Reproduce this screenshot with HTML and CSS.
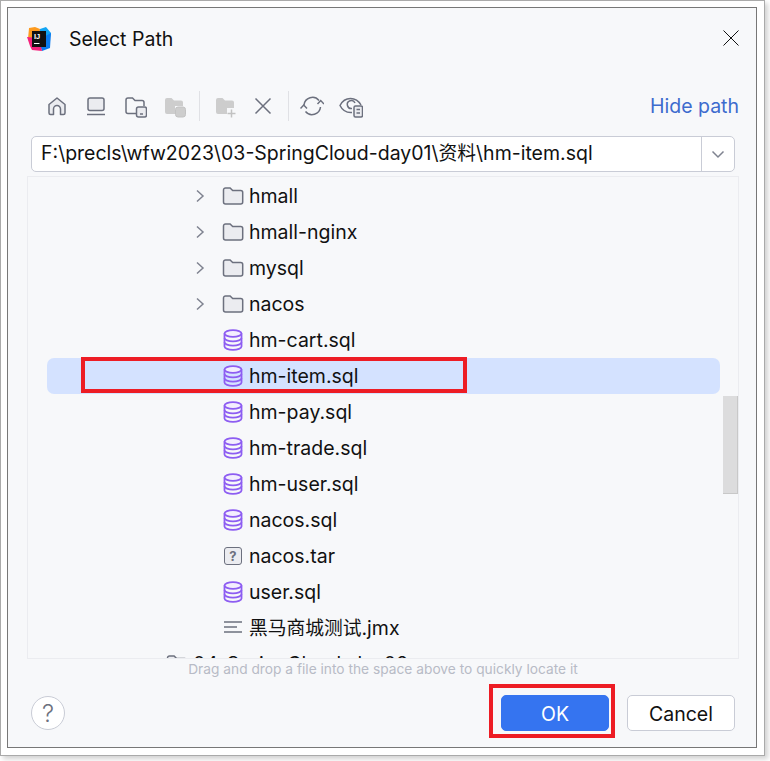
FILE: index.html
```html
<!DOCTYPE html>
<html lang="en">
<head>
    <meta charset="UTF-8">
    <title>Select Path</title>
    <link rel="stylesheet" href="styles.css">
</head>
<body>
    <svg class="sprites" width="0" height="0">
        <symbol id="i-folder" viewBox="0 0 22 20">
            <path d="M1.5 4a2 2 0 0 1 2-2h4.600l2.600 2.600h8a2 2 0 0 1 2 2V16a2 2 0 0 1-2 2H3.500a2 2 0 0 1-2-2z" fill="#ebecf0" stroke="#6c707e" stroke-width="1.500"/>
        </symbol>
        <symbol id="i-db" viewBox="0 0 20 22">
            <g fill="none" stroke="#8d5df2" stroke-width="1.800">
                <ellipse cx="10" cy="4.500" rx="8.500" ry="3.300" fill="#f3eefe"/>
                <path d="M1.500 4.500v13c0 1.800 3.800 3.300 8.500 3.300s8.500-1.500 8.500-3.300v-13"/>
                <path d="M1.500 9c0 1.800 3.800 3.300 8.500 3.300s8.500-1.500 8.500-3.300"/>
                <path d="M1.500 13.300c0 1.800 3.800 3.300 8.500 3.300s8.500-1.500 8.500-3.300"/>
            </g>
        </symbol>
        <symbol id="i-chevron" viewBox="0 0 10 14">
            <path d="M2 1.500 8 7l-6 5.500" fill="none" stroke="#7f8390" stroke-width="1.500"/>
        </symbol>
    </svg>

    <div class="frame">
        <div class="dialog">
            <div class="titlebar">
                <svg class="logo" width="24" height="24" viewBox="0 0 24 24">
                    <path d="M2 1 8 0l5 2-1 10H1z" fill="#fd9a1e"/>
                    <path d="M13 2l6-2 5 6-2 9-10-3z" fill="#12a5f4"/>
                    <path d="M24 6l-1 15-8 3-4-11z" fill="#0b7cf0"/>
                    <path d="M0 10l12 1 3 13-10-1-2-4z" fill="#f5227c"/>
                    <rect x="5" y="4" width="14" height="16" fill="#111"/>
                    <text x="7" y="12" class="logo-text">IJ</text>
                    <rect x="7" y="16" width="5.500" height="1" fill="#fff"/>
                </svg>
                <span class="title">Select Path</span>
                <svg class="close" width="16" height="16" viewBox="0 0 16 16">
                    <path d="M.5.5l15 15M15.500.5l-15 15" stroke="#111" stroke-width="1"/>
                </svg>
            </div>

            <div class="toolbar">
                <div class="tools">
                    <svg class="tool" width="24" height="24" viewBox="0 0 24 24">
                        <path d="M4 10.500 12 4l8 6.500V19a1.500 1.500 0 0 1-1.500 1.500H15.500V15a3.500 3.500 0 0 0-7 0v5.500H5.500A1.500 1.500 0 0 1 4 19z" fill="#ebecf0" stroke="#6c707e" stroke-width="1.500" stroke-linejoin="round"/>
                    </svg>
                    <svg class="tool" width="24" height="24" viewBox="0 0 24 24">
                        <rect x="4" y="4" width="16" height="12.500" rx="2" fill="#ebecf0" stroke="#6c707e" stroke-width="1.500"/>
                        <path d="M3 20.500h18" stroke="#6c707e" stroke-width="1.500"/>
                    </svg>
                    <svg class="tool" width="24" height="24" viewBox="0 0 24 24">
                        <path d="M13 19.500H5a2 2 0 0 1-2-2V6a2 2 0 0 1 2-2h4.500l2.500 2.500h7a2 2 0 0 1 2 2V12" fill="none" stroke="#6c707e" stroke-width="1.500"/>
                        <rect x="13.500" y="13" width="10" height="10" rx="2" fill="#ebecf0" stroke="#6c707e" stroke-width="1.500"/>
                        <path d="M17 20h3" stroke="#6c707e" stroke-width="1.500"/>
                    </svg>
                    <svg class="tool" width="24" height="24" viewBox="0 0 24 24">
                        <path d="M3 6a2 2 0 0 1 2-2h4.500l2.500 2.500h7a2 2 0 0 1 2 2V12h-8v8H5a2 2 0 0 1-2-2z" fill="#cdcdcd"/>
                        <rect x="13.500" y="13" width="10" height="10" rx="2.500" fill="#cdcdcd" stroke="#c2c2c2"/>
                    </svg>
                    <i class="sep"></i>
                    <svg class="tool" width="24" height="24" viewBox="0 0 24 24">
                        <path d="M3 6a2 2 0 0 1 2-2h4.500l2.500 2.500h7a2 2 0 0 1 2 2V14h-7v6H5a2 2 0 0 1-2-2z" fill="#cdcdcd"/>
                        <path d="M18.500 15.500v8M14.500 19.500h8" stroke="#c2c2c2" stroke-width="1.500"/>
                    </svg>
                    <svg class="tool pull" width="24" height="24" viewBox="0 0 24 24">
                        <path d="M4.500 4.500l15 15M19.500 4.500l-15 15" stroke="#6c707e" stroke-width="1.500"/>
                    </svg>
                    <i class="sep"></i>
                    <svg class="tool pull2" width="24" height="24" viewBox="0 0 24 24">
                        <path d="M4 11a8.500 8.500 0 0 1 15-4.500M20.500 13a8.500 8.500 0 0 1-15 4.500" fill="none" stroke="#6c707e" stroke-width="1.500"/>
                        <path d="M.500 14.500 3.700 11l3.300 3.500M17.500 10l3.200-3.500L24 10" fill="none" stroke="#6c707e" stroke-width="1.500"/>
                    </svg>
                    <svg class="tool" width="24" height="24" viewBox="0 0 24 24">
                        <path d="M13 18.500c-6 .5-10-3-12-7 2-4 6-7 10.500-7s8.500 3 10.500 6.500" fill="none" stroke="#6c707e" stroke-width="1.500"/>
                        <path d="M13 14.500a4 4 0 1 1 3-5.500" fill="none" stroke="#6c707e" stroke-width="1.500"/>
                        <rect x="15" y="12" width="8.500" height="11" rx="1.500" fill="#ebecf0" stroke="#6c707e" stroke-width="1.500"/>
                        <path d="M17.500 15.500h3.500M17.500 19h3.500" stroke="#6c707e" stroke-width="1.500"/>
                    </svg>
                </div>
                <a class="hide-path">Hide path</a>
            </div>

            <div class="path-box">
                <span class="path-text">F:\precls\wfw2023\03-SpringCloud-day01\<span class="cjk">资料</span>\hm-item.sql</span>
                <span class="path-drop">
                    <svg width="14" height="9" viewBox="0 0 14 9"><path d="M1.500 1.500 7 7l5.500-5.500" fill="none" stroke="#7f8390" stroke-width="1.500"/></svg>
                </span>
            </div>

            <div class="tree">
                <div class="row"><svg class="chev" width="10" height="14"><use href="#i-chevron"/></svg><svg class="ico" width="22" height="20"><use href="#i-folder"/></svg><span>hmall</span></div>
                <div class="row"><svg class="chev" width="10" height="14"><use href="#i-chevron"/></svg><svg class="ico" width="22" height="20"><use href="#i-folder"/></svg><span>hmall-nginx</span></div>
                <div class="row"><svg class="chev" width="10" height="14"><use href="#i-chevron"/></svg><svg class="ico" width="22" height="20"><use href="#i-folder"/></svg><span>mysql</span></div>
                <div class="row"><svg class="chev" width="10" height="14"><use href="#i-chevron"/></svg><svg class="ico" width="22" height="20"><use href="#i-folder"/></svg><span>nacos</span></div>
                <div class="row leaf"><svg class="ico" width="20" height="22"><use href="#i-db"/></svg><span>hm-cart.sql</span></div>
                <div class="row leaf selected"><svg class="ico" width="20" height="22"><use href="#i-db"/></svg><span>hm-item.sql</span></div>
                <div class="row leaf"><svg class="ico" width="20" height="22"><use href="#i-db"/></svg><span>hm-pay.sql</span></div>
                <div class="row leaf"><svg class="ico" width="20" height="22"><use href="#i-db"/></svg><span>hm-trade.sql</span></div>
                <div class="row leaf"><svg class="ico" width="20" height="22"><use href="#i-db"/></svg><span>hm-user.sql</span></div>
                <div class="row leaf"><svg class="ico" width="20" height="22"><use href="#i-db"/></svg><span>nacos.sql</span></div>
                <div class="row leaf"><span class="unknown">?</span><span>nacos.tar</span></div>
                <div class="row leaf"><svg class="ico" width="20" height="22"><use href="#i-db"/></svg><span>user.sql</span></div>
                <div class="row leaf">
                    <svg class="ico" width="20" height="22" viewBox="0 0 20 22"><path d="M1 5h18M1 10h13M1 15h18" stroke="#6c707e" stroke-width="1.500"/></svg>
                    <span><span class="cjk">黑马商城测试</span>.jmx</span>
                </div>
                <div class="row parent"><svg class="chev" width="10" height="14"><use href="#i-chevron"/></svg><svg class="ico" width="22" height="20"><use href="#i-folder"/></svg><span>04-SpringCloud-day02</span></div>
                <div class="scrollbar"></div>
            </div>

            <div class="hint">Drag and drop a file into the space above to quickly locate it</div>

            <div class="footer">
                <span class="help">?</span>
                <button class="btn primary">OK</button>
                <button class="btn">Cancel</button>
            </div>

            <!-- red marks drawn over the screenshot -->
            <div class="mark mark-row"></div>
            <div class="mark mark-ok"></div>
        </div>
    </div>
</body>
</html>
```

FILE: styles.css
```css
* {
    box-sizing: border-box;
}
html, body {
    margin: 0;
    padding: 0;
}
body {
    width: 770px;
    height: 761px;
    overflow: hidden;
    background: #fff;
    font-family: Inter, "Noto Sans CJK SC", sans-serif;
    color: #111;
}
.sprites {
    position: absolute;
}
.frame {
    width: 765px;
    height: 756px;
    padding: 6px 7px 7px 6px;
    background: #fff;
    border: 1px solid #aaa;
    box-shadow: 3px 3px 5px rgba(0,0,0,0.18);
}
.dialog {
    position: relative;
    height: 741px;
    display: flex;
    flex-direction: column;
    background: #f7f8fa;
    border: 1px solid #777;
}
.titlebar {
    display: flex;
    align-items: center;
    height: 62px;
    padding: 0 17px 0 19px;
    flex: none;
}
.logo {
    flex: none;
}
.logo-text {
    font-family: "Liberation Sans", sans-serif;
    font-size: 7.5px;
    font-weight: bold;
    fill: #fff;
}
.title {
    margin-left: 18px;
    font-size: 19.5px;
    flex: 1;
}
.close {
    margin-top: -3px;
    flex: none;
}
.toolbar {
    display: flex;
    align-items: center;
    justify-content: space-between;
    height: 36px;
    margin-top: 18px;
    padding: 0 17px 0 37px;
    flex: none;
}
.tools {
    display: flex;
    align-items: center;
    gap: 15px;
}
.tool {
    flex: none;
}
.tool.pull {
    margin-left: -1px;
}
.tool.pull2 {
    margin-left: -2px;
}
.sep {
    display: block;
    width: 1px;
    height: 30px;
    margin: 0 -2px;
    background: #e0e1e5;
}
.hide-path {
    font-size: 19.5px;
    color: #3d6bce;
}
.path-box {
    display: flex;
    height: 36px;
    margin: 12px 21px 0 23px;
    background: #fff;
    border: 1.5px solid #c9ccd6;
    border-radius: 5px;
    flex: none;
}
.path-text {
    flex: 1;
    padding-left: 9px;
    font-size: 19.5px;
    line-height: 33px;
    white-space: nowrap;
}
.cjk {
    font-size: 18.75px;
}
.path-drop {
    display: flex;
    align-items: center;
    justify-content: center;
    width: 33px;
    border-left: 1.5px solid #c9ccd6;
}
.tree {
    position: relative;
    height: 483px;
    margin: 4px 17px 0 19px;
    padding-top: 1px;
    overflow: hidden;
    border: 1px solid #ebecf0;
    flex: none;
}
.row {
    display: flex;
    align-items: center;
    height: 36px;
    margin: 0 18px 0 19px;
    padding-left: 148px;
    font-size: 19.5px;
    line-height: 24px;
    white-space: nowrap;
    border-radius: 7px;
}
.row .chev {
    margin-right: 17px;
    flex: none;
}
.row .ico {
    flex: none;
}
.row > span:last-child {
    margin-left: 5px;
}
.row.leaf {
    padding-left: 176px;
}
.row.leaf > span:last-child {
    margin-left: 6px;
}
.row.parent {
    padding-left: 92px;
}
.row.selected {
    background: #d4e2ff;
}
.unknown {
    display: flex;
    align-items: center;
    justify-content: center;
    width: 18px;
    height: 18px;
    margin-left: 1px;
    margin-right: 1px;
    font-size: 13px;
    font-weight: 700;
    color: #6c707e;
    background: #ebecf0;
    border: 1.5px solid #6c707e;
    border-radius: 3px;
}
.scrollbar {
    position: absolute;
    top: 219px;
    right: 0;
    width: 15px;
    height: 98px;
    background: #dcdcdd;
    border-right: 1px solid #c8c8c8;
    border-bottom: 1px solid #c8c8c8;
}
.hint {
    margin-top: 1px;
    padding-left: 2px;
    height: 18px;
    font-size: 13.75px;
    line-height: 18px;
    text-align: center;
    color: #b8bbc6;
    flex: none;
}
.footer {
    display: flex;
    align-items: center;
    height: 36px;
    margin-top: 17px;
    padding: 0 21px 0 23px;
    gap: 18px;
    flex: none;
}
.help {
    display: flex;
    align-items: center;
    justify-content: center;
    width: 34px;
    height: 34px;
    margin-right: auto;
    font-size: 24px;
    font-weight: 300;
    color: #6c707e;
    background: #fff;
    border: 1.5px solid #c9ccd6;
    border-radius: 50%;
}
.btn {
    width: 108px;
    height: 36px;
    padding-top: 2px;
    font-family: inherit;
    font-size: 19.5px;
    color: #111;
    background: #fff;
    border: 1.5px solid #c9ccd6;
    border-radius: 5px;
}
.btn.primary {
    color: #fff;
    background: #3574f0;
    border-color: #3574f0;
}
.mark {
    position: absolute;
    border: 4px solid #ed1c24;
}
.mark-row {
    left: 73px;
    top: 349px;
    width: 386px;
    height: 36px;
}
.mark-ok {
    left: 481px;
    top: 676px;
    width: 126px;
    height: 54px;
}
```
